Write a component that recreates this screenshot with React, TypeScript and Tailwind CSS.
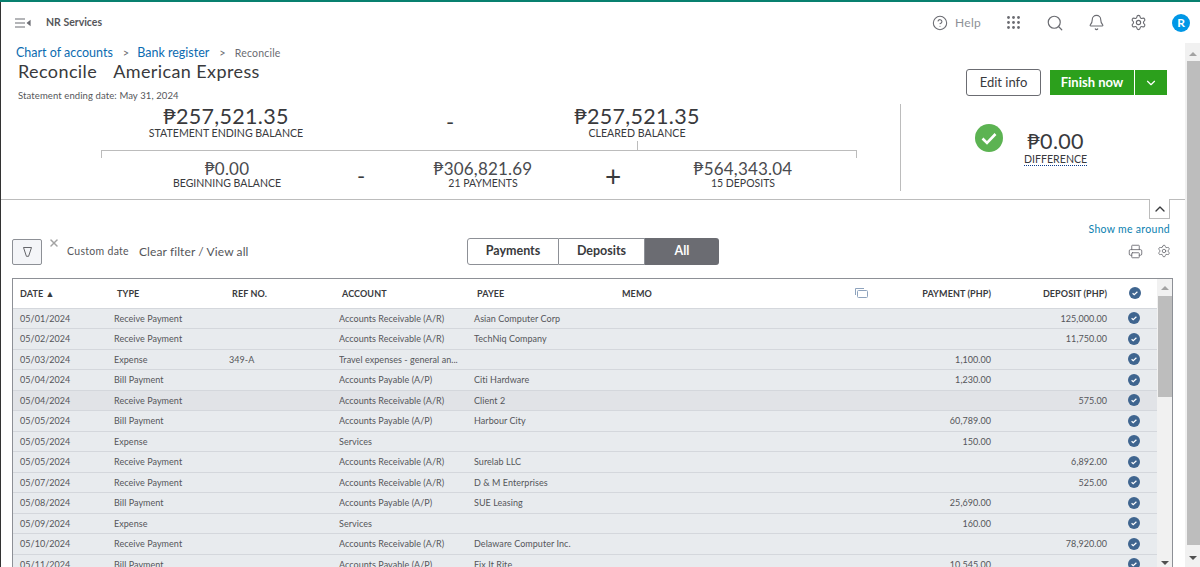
import { Bell, ChevronDown, ChevronUp, CircleHelp, Printer, Search, Settings, X } from 'lucide-react';

const AR = 'Accounts Receivable (A/R)';
const AP = 'Accounts Payable (A/P)';

const rows = [
	{ date: '05/01/2024', type: 'Receive Payment', ref: '', account: AR, payee: 'Asian Computer Corp', payment: '', deposit: '125,000.00' },
	{ date: '05/02/2024', type: 'Receive Payment', ref: '', account: AR, payee: 'TechNiq Company', payment: '', deposit: '11,750.00' },
	{ date: '05/03/2024', type: 'Expense', ref: '349-A', account: 'Travel expenses - general an...', payee: '', payment: '1,100.00', deposit: '' },
	{ date: '05/04/2024', type: 'Bill Payment', ref: '', account: AP, payee: 'Citi Hardware', payment: '1,230.00', deposit: '' },
	{ date: '05/04/2024', type: 'Receive Payment', ref: '', account: AR, payee: 'Client 2', payment: '', deposit: '575.00' },
	{ date: '05/05/2024', type: 'Bill Payment', ref: '', account: AP, payee: 'Harbour City', payment: '60,789.00', deposit: '' },
	{ date: '05/05/2024', type: 'Expense', ref: '', account: 'Services', payee: '', payment: '150.00', deposit: '' },
	{ date: '05/05/2024', type: 'Receive Payment', ref: '', account: AR, payee: 'Surelab LLC', payment: '', deposit: '6,892.00' },
	{ date: '05/07/2024', type: 'Receive Payment', ref: '', account: AR, payee: 'D & M Enterprises', payment: '', deposit: '525.00' },
	{ date: '05/08/2024', type: 'Bill Payment', ref: '', account: AP, payee: 'SUE Leasing', payment: '25,690.00', deposit: '' },
	{ date: '05/09/2024', type: 'Expense', ref: '', account: 'Services', payee: '', payment: '160.00', deposit: '' },
	{ date: '05/10/2024', type: 'Receive Payment', ref: '', account: AR, payee: 'Delaware Computer Inc.', payment: '', deposit: '78,920.00' },
	{ date: '05/11/2024', type: 'Bill Payment', ref: '', account: AP, payee: 'Fix It Rite', payment: '10,545.00', deposit: '' },
];

const cols = 'grid grid-cols-[101px_115px_110px_135px_148px_248px_121px_116px_50px]';

function RowCheck({ size = 12 }: { size?: number }) {
	return (
		<svg width={size} height={size} viewBox="0 0 12 12">
			<circle cx="6" cy="6" r="6" fill="#3f658f" />
			<path d="M3.6 6.2l1.6 1.5 3.2-3" fill="none" stroke="#fff" strokeWidth="1.2" />
		</svg>
	);
}

function Amount({ value, label, big }: { value: string; label: string; big?: boolean }) {
	return (
		<div className="flex flex-col items-center">
			<div className={big ? 'text-[21.5px] leading-[24px] text-[#393a3d] tracking-[0.3px]' : 'text-[17px] leading-[18px] text-[#4a4b4f] tracking-[0.2px]'}>
				{value}
			</div>
			<div className={big ? 'text-[10.6px] leading-[12px] text-[#393a3d] -mt-[1px]' : 'text-[10.5px] leading-[11px] text-[#393a3d]'}>{label}</div>
		</div>
	);
}

function Scrollbar() {
	return (
		<div className="w-[15px] bg-[#f1f1f1] flex flex-col items-end shrink-0">
			<div className="h-[18px] w-full flex items-end justify-center pb-[5px]">
				<div className="w-0 h-0 border-x-[4px] border-x-transparent border-b-[4px] border-b-[#a3a3a3]" />
			</div>
			<div className="w-[13px] h-[484px] bg-[#bdbdbd]" />
			<div className="flex-1 w-full flex justify-center pt-[11px]">
				<div className="w-0 h-0 border-x-[4px] border-x-transparent border-t-[4px] border-t-[#505050]" />
			</div>
		</div>
	);
}

export default function App() {
	return (
		<div className="w-[1200px] h-[567px] overflow-hidden bg-white flex flex-col font-['Lato','Open_Sans',sans-serif] text-[#393a3d]">
			<div className="h-[2px] bg-[#08806f] shrink-0" />
			<div className="flex-1 min-h-0 flex flex-col border-l border-[#333]">
				<header className="h-[41px] flex items-center shrink-0">
					<div className="w-[45px] pl-[14px]">
						<svg width="16" height="10" viewBox="0 0 16 10" fill="none" stroke="#6b6c72" strokeWidth="1.2">
							<path d="M0 1h10M0 5h10M0 9h10" />
							<path d="M15 3l-2.5 2 2.5 2z" fill="#6b6c72" />
						</svg>
					</div>
					<span className="text-[10.5px] font-bold text-[#55565a]">NR Services</span>
					<div className="ml-auto flex items-center pr-[10px]">
						<CircleHelp size={16} strokeWidth={1.6} className="text-[#6b6c72]" />
						<span className="ml-[7px] w-[33px] text-[12px] text-[#8d9096] tracking-[0.3px]">Help</span>
						<svg width="13" height="13" viewBox="0 0 13 13" fill="#6b6c72" className="ml-[19px]">
							{[1.5, 6.5, 11.5].map((y) => [1.5, 6.5, 11.5].map((x) => <circle key={`${x}-${y}`} cx={x} cy={y} r="1.4" />))}
						</svg>
						<Search size={18} strokeWidth={1.6} className="ml-[26px] text-[#6b6c72]" />
						<Bell size={17} strokeWidth={1.6} className="ml-[24px] text-[#6b6c72]" />
						<Settings size={17} strokeWidth={1.6} className="ml-[25px] text-[#6b6c72]" />
						<div className="ml-[25px] w-[18px] h-[18px] rounded-full bg-[#0097e6] text-white text-[12px] font-bold flex items-center justify-center">
							R
						</div>
					</div>
				</header>

				<div className="flex flex-1 min-h-0">
					<main className="w-[1184px] flex flex-col overflow-hidden">
						<div className="flex shrink-0 h-[157px] border-b border-[#bcbcbc]">
							<div className="w-[899px] shrink-0 flex flex-col">
								<div className="flex items-center pl-[15px] h-[20px] text-[12.5px] text-[#0b6bb0]">
									<span>Chart of accounts</span>
									<span className="ml-[10px] text-[#6b6c72] text-[11px]">&gt;</span>
									<span className="ml-[8px]">Bank register</span>
									<span className="ml-[10px] text-[#6b6c72] text-[11px]">&gt;</span>
									<span className="ml-[9px] mt-[1px] text-[10.5px] text-[#6b6c72] tracking-[0.2px]">Reconcile</span>
								</div>
								<div className="pl-[17px] -mt-[1px] h-[19px] text-[18px] leading-[19px] text-[#393a3d] flex tracking-[0.4px]">
									<span>Reconcile</span>
									<span className="ml-[16px]">American Express</span>
								</div>
								<div className="pl-[17px] mt-[8px] h-[13px] text-[9.5px] leading-[13px] text-[#55565a] tracking-[0.1px]">Statement ending date: May 31, 2024</div>
								<div className="grid grid-cols-[250px_198px_176px] pl-[100px] mt-[2px]">
									<Amount big value="₱257,521.35" label="STATEMENT ENDING BALANCE" />
									<div className="text-center text-[22px] leading-[30px] pt-[3px]">-</div>
									<Amount big value="₱257,521.35" label="CLEARED BALANCE" />
								</div>
								<div className="ml-[636px] mt-[2px] w-px h-[9px] bg-[#bcbcbc]" />
								<div className="ml-[100px] w-[756px] h-[8px] border-t border-x border-[#bcbcbc]" />
								<div className="grid grid-cols-[252px_16px_228px_32px_228px] pl-[100px] mt-[2px]">
									<Amount value="₱0.00" label="BEGINNING BALANCE" />
									<div className="text-center text-[22px] leading-[30px] pt-[1px]">-</div>
									<Amount value="₱306,821.69" label="21 PAYMENTS" />
									<div className="text-center text-[28px] leading-[30px] pt-[1px]">+</div>
									<Amount value="₱564,343.04" label="15 DEPOSITS" />
								</div>
							</div>
							<div className="flex-1 flex flex-col">
								<div className="flex justify-end gap-[9px] pr-[18px] h-[61px] items-start pt-[27px]">
									<button className="w-[75px] h-[27px] -mt-[1px] border border-[#6b6c72] rounded-[3px] text-[13px] text-[#393a3d]">Edit info</button>
									<div className="flex gap-[1px]">
										<button className="w-[84px] h-[25px] bg-[#2ca01c] text-white text-[13px] font-bold">Finish now</button>
										<button className="w-[32px] h-[25px] bg-[#2ca01c] text-white flex items-center justify-center">
											<ChevronDown size={14} strokeWidth={2} />
										</button>
									</div>
								</div>
								<div className="flex">
									<div className="w-px h-[87px] bg-[#bcbcbc]" />
									<div className="flex items-start pt-[20px]">
										<div className="ml-[74px] w-[28px] h-[28px] rounded-full bg-[#5cb352] flex items-center justify-center">
											<svg width="16" height="13" viewBox="0 0 16 13" fill="none" stroke="#fff" strokeWidth="2.6">
												<path d="M1.5 6.5l4.5 4.5 8.5-9" />
											</svg>
										</div>
										<div className="ml-[21px] mt-[5px] flex flex-col items-center">
											<div className="text-[21.5px] leading-[24px] tracking-[0.3px]">₱0.00</div>
											<div className="text-[10.6px] leading-[12px] border-b border-dotted border-[#0b3b8c]">DIFFERENCE</div>
										</div>
									</div>
								</div>
							</div>
						</div>

						<div className="flex justify-end pr-[15px] shrink-0">
							<div className="w-[21px] h-[20px] -mt-[1px] border border-t-0 border-[#bcbcbc] bg-white flex items-center justify-center">
								<ChevronUp size={16} strokeWidth={2} className="text-[#393a3d]" />
							</div>
						</div>
						<div className="text-right pr-[15px] text-[10.5px] leading-[14px] mt-[3px] text-[#0b7fb0] tracking-[0.3px] shrink-0">Show me around</div>

						<div className="flex items-center h-[30px] pl-[11px] pr-[14px] mt-[1px] shrink-0">
							<div className="w-[455px] flex items-center shrink-0">
								<div className="w-[30px] h-[26px] border border-[#8d9096] rounded-[2px] bg-[#f4f5f8] flex items-center justify-center">
									<svg width="9" height="10" viewBox="0 0 9 10" fill="none" stroke="#55565a" strokeWidth="0.9">
										<path d="M0.5 0.5h8L5.6 9.3H3.4z" />
									</svg>
								</div>
								<X size={12} strokeWidth={3} className="ml-[6px] -mt-[19px] text-[#a3a3a3]" />
								<span className="ml-[7px] text-[10.5px] text-[#55565a] tracking-[0.3px]">Custom date</span>
								<span className="ml-[10px] -mt-[1px] text-[12px] text-[#55565a] tracking-[0.1px]">Clear filter / View all</span>
							</div>
							<div className="flex h-[27px] -mt-[1px] text-[12.5px] font-bold">
								<div className="w-[92px] border border-[#8d9096] rounded-l-[3px] flex items-center justify-center">Payments</div>
								<div className="w-[86px] border-y border-r border-[#8d9096] flex items-center justify-center">Deposits</div>
								<div className="w-[74px] bg-[#6b6c72] text-white rounded-r-[3px] flex items-center justify-center">All</div>
							</div>
							<Printer size={15} strokeWidth={1.4} className="ml-auto -mt-[2px] text-[#6b6c72]" />
							<Settings size={14} strokeWidth={1.4} className="ml-[14px] -mt-[2px] text-[#6b6c72]" />
						</div>

						<div className="ml-[11px] mt-[11px] w-[1161px] flex-1 border-t border-x border-[#8d9096] flex min-h-0">
							<div className="w-[1144px] shrink-0">
								<div className={`${cols} h-[29.5px] items-center border-b border-[#d4d7dc] text-[9px] font-bold text-[#393a3d] tracking-[0.1px]`}>
									<div className="pl-[7px]">DATE ▲</div>
									<div className="pl-[3px]">TYPE</div>
									<div className="pl-[3px]">REF NO.</div>
									<div className="pl-[3px]">ACCOUNT</div>
									<div className="pl-[3px]">PAYEE</div>
									<div className="flex items-center">
										<span>MEMO</span>
										<svg width="13" height="10" viewBox="0 0 13 10" fill="none" stroke="#8ea3bd" strokeWidth="1" className="ml-auto mr-[2px]">
											<path d="M0.5 7V0.5H9" />
											<rect x="2.5" y="2.5" width="10" height="7" rx="1" />
										</svg>
									</div>
									<div className="text-right">PAYMENT (PHP)</div>
									<div className="text-right">DEPOSIT (PHP)</div>
									<div className="flex justify-center pl-[5px]"><RowCheck /></div>
								</div>
								{rows.map((row, i) => (
									<div
										key={i}
										className={`${cols} h-[20.5px] items-center border-b border-[#d4d7dc] text-[9px] text-[#55565a] tracking-[0.05px] ${i === 4 ? 'bg-[#e1e3e7]' : 'bg-[#e8ebee]'}`}
									>
										<div className="pl-[7px]">{row.date}</div>
										<div>{row.type}</div>
										<div>{row.ref}</div>
										<div className="truncate">{row.account}</div>
										<div>{row.payee}</div>
										<div />
										<div className="text-right">{row.payment}</div>
										<div className="text-right">{row.deposit}</div>
										<div className="flex justify-center pl-[3px]"><RowCheck /></div>
									</div>
								))}
							</div>
							<div className="flex-1 bg-[#f1f1f1] flex flex-col items-center">
								<div className="h-[17px] flex items-center">
									<div className="w-0 h-0 border-x-[4px] border-x-transparent border-b-[4px] border-b-[#a3a3a3]" />
								</div>
								<div className="w-[14px] h-[101px] bg-[#bdbdbd]" />
								<div className="mt-auto h-[6px]">
									<div className="w-0 h-0 border-x-[4px] border-x-transparent border-t-[4px] border-t-[#505050]" />
								</div>
							</div>
						</div>
					</main>
					<Scrollbar />
				</div>
			</div>
		</div>
	);
}
